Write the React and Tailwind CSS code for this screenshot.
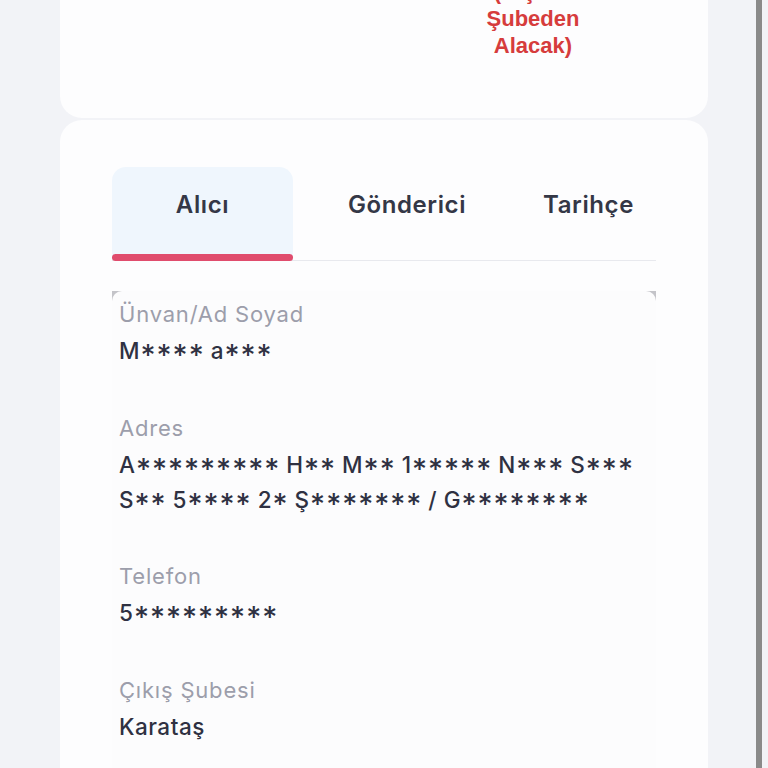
import React from "react";

const font = { fontFamily: "Inter, 'Noto Sans', sans-serif" };

function Masked({ text }) {
  const parts = text.split(/(\*+)/);
  return (
    <span className="whitespace-nowrap">
      {parts.map((p, i) =>
        p.startsWith("*") ? (
          <span key={i} className="text-[24.5px] tracking-[0px] [font-feature-settings:'case']">
            {p}
          </span>
        ) : (
          <span key={i}>{p}</span>
        )
      )}
    </span>
  );
}

function Field({ label, children }) {
  return (
    <div className="mb-[41.5px]">
      <div className="text-[22px] leading-[37px] tracking-[0.8px] text-[#9c9eab]">{label}</div>
      <div className="text-[22.5px] leading-[35px] tracking-[0.5px] font-medium text-[#2f3142]">{children}</div>
    </div>
  );
}

export default function App() {
  return (
    <div className="relative h-[768px] overflow-hidden bg-[#f2f3f7]" style={font}>
      <div className="px-[60px]">
        <div className="h-[118px] rounded-b-[22px] bg-[#fdfdfe] overflow-hidden">
          <div className="ml-[353px] w-[240px] mt-[-22px] text-center text-[22px] leading-[27px] font-bold text-[#d63c3c]" style={{ fontFamily: "'Liberation Sans', Arial, sans-serif" }}>
            <div>(Kişisel</div>
            <div>Şubeden</div>
            <div>Alacak)</div>
          </div>
        </div>
        <div className="mt-[2px] h-[700px] rounded-t-[22px] bg-[#fdfdfe] px-[52px] pt-[47px]">
          <div className="flex border-b border-[#e8e9ee]">
            <div className="w-[181px] h-[93px] relative rounded-t-[14px] bg-[#eff6fd] flex justify-center pt-[23px]">
              <span className="text-[24px] leading-[30px] tracking-[0.6px] font-semibold text-[#343746]">Alıcı</span>
              <div className="absolute left-0 right-0 bottom-[-1px] h-[7px] rounded-full bg-[#e04c6d]" />
            </div>
            <div className="w-[228px] h-[93px] flex justify-center pt-[23px]">
              <span className="text-[24px] leading-[30px] tracking-[0.6px] font-semibold text-[#343746]">Gönderici</span>
            </div>
            <div className="flex-1 h-[93px] flex justify-center pt-[23px]">
              <span className="text-[24px] leading-[30px] tracking-[0.6px] font-semibold text-[#343746]">Tarihçe</span>
            </div>
          </div>
          <div className="mt-[30px] bg-[#c4c4c9]">
            <div className="rounded-t-[10px] bg-[#fcfcfd] pl-[7px] pt-[5px] h-[600px]">
              <Field label="Ünvan/Ad Soyad"><Masked text="M**** a***" /></Field>
              <Field label="Adres">
                <Masked text="A********* H** M** 1***** N*** S***" />
                <br />
                <Masked text="S** 5**** 2* Ş******* / G********" />
              </Field>
              <Field label="Telefon"><Masked text="5*********" /></Field>
              <Field label="Çıkış Şubesi">Karataş</Field>
            </div>
          </div>
        </div>
      </div>
      <div className="absolute top-0 bottom-0 right-[6px] w-[6px] bg-[#8a8a8a]" />
    </div>
  );
}
